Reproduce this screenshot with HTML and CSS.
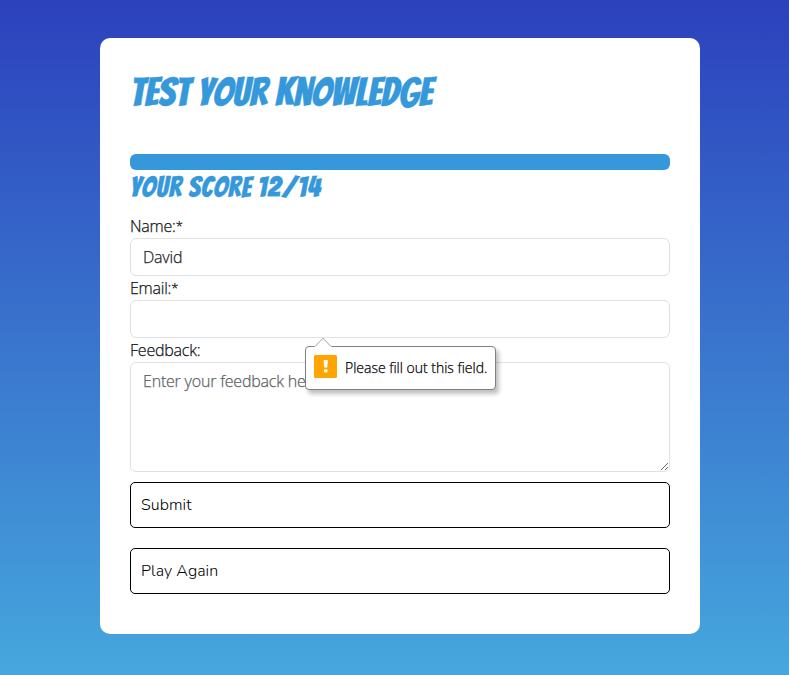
FILE: index.html
```html
<!DOCTYPE html>
<html lang="en">
<head>
<meta charset="utf-8">
<title>Test Your Knowledge</title>
<link rel="stylesheet" href="styles.css">
</head>
<body>
<main class="card">
  <h1 class="title">Test Your Knowledge</h1>
  <div class="progress"></div>
  <h2 class="score">Your Score 12/14</h2>
  <form class="form" novalidate>
    <label class="label" for="name">Name:<span class="star">*</span></label>
    <input class="control" id="name" type="text" value="David">
    <label class="label" for="email">Email:<span class="star">*</span></label>
    <div class="field">
      <input class="control" id="email" type="email">
      <div class="tooltip" role="alert">
        <svg class="arrow" width="18" height="10" viewBox="0 0 18 10"><path d="M0 10 9 1 18 10" fill="#fff"/><path d="M0 9.5H1L9 1.2 17 9.5H18" fill="none" stroke="#a0a0a0"/></svg>
        <svg class="warn" width="23" height="23" viewBox="0 0 23 23"><rect width="23" height="23" rx="1.5" fill="#ffa400"/><path d="M9.6 5h4.2l-.5 7.6h-3.2z" fill="#fff"/><rect x="9.9" y="14.2" width="3.6" height="3.4" rx=".8" fill="#fff"/></svg>
        <span class="message">Please fill out this field.</span>
      </div>
    </div>
    <label class="label" for="feedback">Feedback:</label>
    <textarea class="control area" id="feedback" placeholder="Enter your feedback here"></textarea>
    <button class="btn" type="button">Submit</button>
    <button class="btn" type="button">Play Again</button>
  </form>
</main>
</body>
</html>
```
FILE: styles.css
```css
* { box-sizing: border-box; }
html { height: 100%; }
body {
  margin: 0;
  height: 675px;
  padding: 38px 89px 0 100px;
  overflow: hidden;
  background: linear-gradient(#2c41bd, #46a7dd);
  font: 350 16px/24px "Segoe UI", "Open Sans", "Noto Sans", sans-serif;
  color: #212529;
  -webkit-text-stroke-width: .25px;
}
.card {
  width: 600px;
  height: 596px;
  padding: 30px;
  border-radius: 10px;
  background: #fff;
}
.title, .score {
  margin: 0;
  color: #3498db;
  font-family: Bangers, Roboto, sans-serif;
  font-weight: 400;
  white-space: nowrap;
  -webkit-text-stroke-width: .4px;
}
.title { height: 86px; font-size: 40px; line-height: 48px; }
.progress { height: 16px; border-radius: 6px; background: #3498db; }
.score { height: 44px; font-size: 28px; line-height: 35px; letter-spacing: .8px; }
.form { display: flex; flex-direction: column; }
.label { height: 24px; padding-top: 1px; line-height: 23px; letter-spacing: -.22px; color: #101418; }
.star { font-size: 13px; letter-spacing: 0; position: relative; top: -1px; }
.field { position: relative; display: flex; }
.control {
  width: 100%;
  height: 38px;
  margin: 0;
  padding: 6px 12px;
  border: 1px solid #dee2e6;
  border-radius: 6px;
  background: #fff;
  color: #212529;
  font: inherit;
  letter-spacing: -.2px;
  outline: 0;
}
.area { height: 110px; resize: vertical; }
.area::placeholder { color: #5d6267; opacity: 1; }
.btn {
  height: 46px;
  margin: 10px 0;
  padding: 0 10px 1px;
  border: 1px solid #000;
  border-radius: 5px;
  background: #fff;
  color: #000;
  font: 360 16px/24px Nunito, Lato, sans-serif;
  letter-spacing: .07px;
  text-align: left;
  -webkit-text-stroke-width: 0;
}
.tooltip {
  position: absolute;
  left: 175px;
  top: 46px;
  z-index: 1;
  display: flex;
  align-items: center;
  width: 191px;
  height: 44px;
  padding: 0 8px 3px;
  gap: 8px;
  border: 1px solid #808080;
  border-radius: 4px;
  background: #fff;
  box-shadow: 3px 4px 4px rgba(0,0,0,.25);
  color: #000;
  font-size: 14px;
  letter-spacing: -.01px;
  white-space: nowrap;
}
.message { position: relative; top: 1px; }
.arrow { position: absolute; left: 8px; top: -10px; }
.warn { flex: none; }
```
